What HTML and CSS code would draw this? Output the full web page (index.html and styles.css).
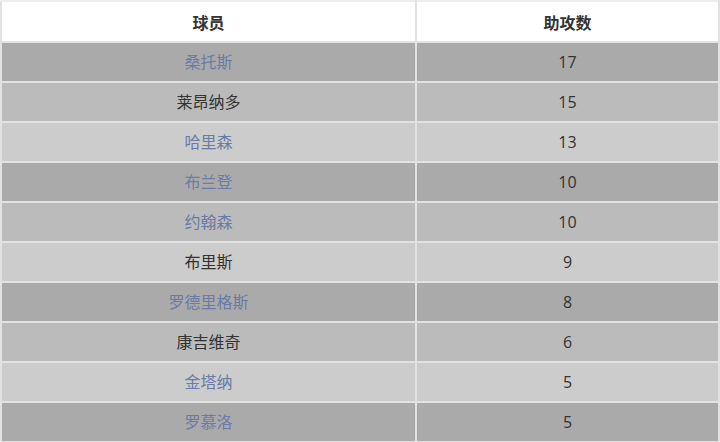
FILE: index.html
```html
<!DOCTYPE html>
<html lang="zh">
<head>
<meta charset="utf-8">
<link rel="stylesheet" href="styles.css">
</head>
<body>
<table class="stats">
  <thead>
    <tr><th class="col-name">球员</th><th class="col-num">助攻数</th></tr>
  </thead>
  <tbody>
    <tr><td class="link">桑托斯</td><td>17</td></tr>
    <tr><td>莱昂纳多</td><td>15</td></tr>
    <tr><td class="link">哈里森</td><td>13</td></tr>
    <tr><td class="link">布兰登</td><td>10</td></tr>
    <tr><td class="link">约翰森</td><td>10</td></tr>
    <tr><td>布里斯</td><td>9</td></tr>
    <tr><td class="link">罗德里格斯</td><td>8</td></tr>
    <tr><td>康吉维奇</td><td>6</td></tr>
    <tr><td class="link">金塔纳</td><td>5</td></tr>
    <tr><td class="link">罗慕洛</td><td>5</td></tr>
  </tbody>
</table>
</body>
</html>
```
FILE: styles.css
```css
html, body {
  margin: 0;
  padding: 0;
  background: #fff;
}
.stats {
  width: 720px;
  border-collapse: collapse;
  border: 2px solid #eeeeee;
  font-family: "Open Sans", "Noto Sans CJK SC", sans-serif;
  font-size: 16px;
  color: #333;
}
.stats th, .stats td {
  height: 38px;
  padding: 0;
  text-align: center;
  vertical-align: middle;
  border: 2px solid #e2e2e2;
  line-height: 20px;
}
.stats th {
  height: 37px;
  padding-top: 2px;
  background: #fff;
  font-weight: 700;
  color: #333;
  border-top-color: #eeeeee;
}
.col-name { width: 413px; }
.stats tbody tr:nth-child(3n+1) td { background: #aaaaaa; }
.stats tbody tr:nth-child(3n+2) td { background: #bbbbbb; }
.stats tbody tr:nth-child(3n) td { background: #cccccc; }
.stats td.link { color: #6a7ba8; }
```
